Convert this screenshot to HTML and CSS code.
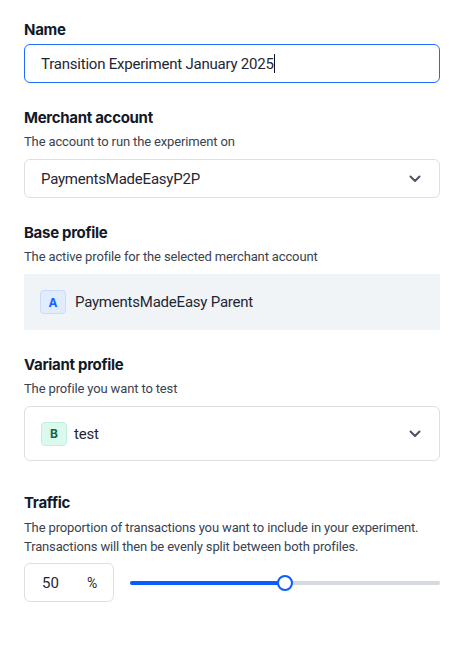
FILE: index.html
```html
<!DOCTYPE html>
<html>
<head>
<meta charset="utf-8">
<link rel="stylesheet" href="styles.css">
</head>
<body>
<form class="form">
  <div class="field field-name">
    <div class="label">Name</div>
    <div class="input input-focus"><span class="value">Transition Experiment January 2025</span><span class="caret"></span></div>
  </div>

  <div class="field">
    <div class="label">Merchant account</div>
    <div class="desc">The account to run the experiment on</div>
    <div class="input select">
      <span class="value">PaymentsMadeEasyP2P</span>
      <svg class="chev" width="12" height="8" viewBox="0 0 12 8"><path d="M1.5 1.5 L6 6 L10.5 1.5" fill="none" stroke="#4b5563" stroke-width="2" stroke-linecap="round" stroke-linejoin="round"/></svg>
    </div>
  </div>

  <div class="field">
    <div class="label">Base profile</div>
    <div class="desc">The active profile for the selected merchant account</div>
    <div class="readonly">
      <span class="badge badge-a">A</span>
      <span class="value">PaymentsMadeEasy Parent</span>
    </div>
  </div>

  <div class="field">
    <div class="label">Variant profile</div>
    <div class="desc">The profile you want to test</div>
    <div class="input select tall">
      <span class="badge badge-b">B</span>
      <span class="value grow">test</span>
      <svg class="chev" width="12" height="8" viewBox="0 0 12 8"><path d="M1.5 1.5 L6 6 L10.5 1.5" fill="none" stroke="#4b5563" stroke-width="2" stroke-linecap="round" stroke-linejoin="round"/></svg>
    </div>
  </div>

  <div class="field field-traffic">
    <div class="label">Traffic</div>
    <div class="desc">The proportion of transactions you want to include in your experiment. Transactions will then be evenly split between both profiles.</div>
    <div class="traffic-row">
      <div class="num"><span class="num-val">50</span><span class="pct">%</span></div>
      <div class="slider">
        <div class="track"><div class="fill" style="width:50%"></div></div>
        <div class="thumb" style="left:50%"></div>
      </div>
    </div>
  </div>
</form>
</body>
</html>
```
FILE: styles.css
```css
* { box-sizing: border-box; }
html, body { margin: 0; padding: 0; background: #ffffff; }
body {
  font-family: Roboto, "Noto Sans", sans-serif;
  color: #1c2330;
  -webkit-font-smoothing: antialiased;
}
.form {
  width: 416px;
  margin-left: 24px;
  padding-top: 20px;
  display: flex;
  flex-direction: column;
}
.field { margin-bottom: 25px; }
.field-traffic { margin-top: 7px; }
.label {
  font-family: Inter, Roboto, sans-serif;
  font-size: 15px;
  font-weight: 700;
  line-height: 20px;
  color: #111a2b;
  letter-spacing: -0.3px;
}
.desc {
  font-size: 13px;
  line-height: 19px;
  color: #3a4250;
  margin-top: 4px;
  margin-bottom: 8px;
  letter-spacing: -0.14px;
}
.field-traffic .desc { margin-top: 5px; margin-bottom: 7px; }
.field-name .label { margin-bottom: 4px; }
.input {
  height: 39px;
  border: 1px solid #dcdfe4;
  border-radius: 6px;
  display: flex;
  align-items: center;
  padding: 0 16px;
  font-size: 15px;
  color: #1f2633;
  background: #fff;
}
.input-focus { border-color: #1f6bff; }
.value { letter-spacing: -0.22px; }
.caret {
  display: inline-block;
  width: 1px;
  height: 19px;
  background: #111;
  margin-left: 0px;
}
.select { justify-content: space-between; padding-right: 18px; }
.select .chev { flex: none; }
.tall { height: 55px; margin-top: 8px; }
.grow { flex: 1; }
.readonly {
  height: 56px;
  background: #f1f4f7;
  display: flex;
  align-items: center;
  padding: 0 16px;
  font-size: 15px;
  color: #1f2633;
}
.badge {
  width: 26px;
  height: 24px;
  border-radius: 4px;
  display: flex;
  align-items: center;
  justify-content: center;
  font-family: Inter, Roboto, sans-serif;
  font-size: 12px;
  font-weight: 700;
  margin-right: 9px;
  flex: none;
}
.badge-a { background: #e2ecff; border: 1px solid #c9dafc; color: #1a5fff; }
.badge-b { background: #dcf9ee; border: 1px solid #c0f0dd; color: #0f6b48; margin-right: 7px; }
.traffic-row {
  display: flex;
  align-items: center;
  gap: 16px;
}
.num {
  width: 90px;
  height: 39px;
  border: 1px solid #dcdfe4;
  border-radius: 6px;
  display: flex;
  align-items: center;
  padding-left: 17px;
  font-size: 15px;
  color: #1f2633;
}
.num-val { width: 45px; }
.pct { font-size: 14px; }
.slider {
  flex: 1;
  position: relative;
  height: 16px;
}
.track {
  position: absolute;
  left: 0; right: 0; top: 6px;
  height: 4px;
  border-radius: 2px;
  background: #d6d9de;
}
.fill {
  height: 100%;
  border-radius: 2px;
  background: #0b5cff;
}
.thumb {
  position: absolute;
  top: 0;
  width: 16px;
  height: 16px;
  margin-left: -8px;
  border-radius: 50%;
  background: #fff;
  border: 2px solid #0b5cff;
}
```
